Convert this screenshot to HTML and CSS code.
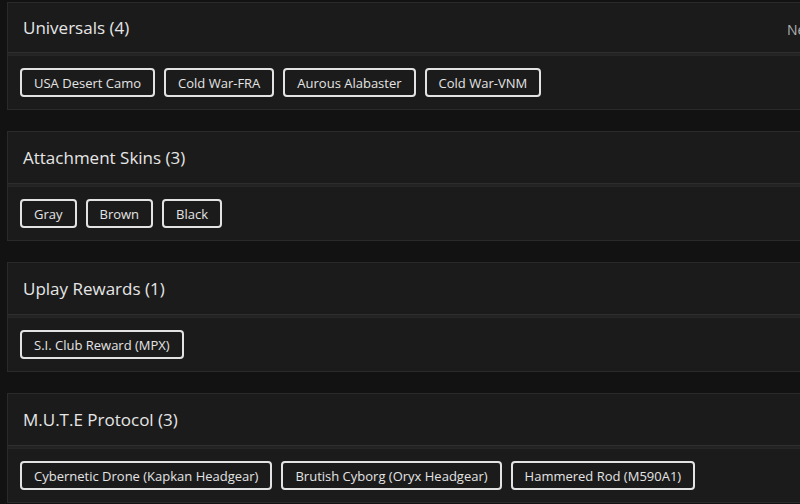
FILE: index.html
```html
<!DOCTYPE html>
<html>
<head>
<meta charset="utf-8">
<link rel="stylesheet" href="styles.css">
</head>
<body>
<div class="page">
  <section class="card">
    <header class="card-head card-head-first">
      <h2 class="title">Universals (4)</h2>
      <span class="aside">New</span>
    </header>
    <div class="card-body">
      <span class="pill">USA Desert Camo</span>
      <span class="pill">Cold War-FRA</span>
      <span class="pill">Aurous Alabaster</span>
      <span class="pill">Cold War-VNM</span>
    </div>
  </section>
  <section class="card">
    <header class="card-head">
      <h2 class="title">Attachment Skins (3)</h2>
    </header>
    <div class="card-body">
      <span class="pill">Gray</span>
      <span class="pill">Brown</span>
      <span class="pill">Black</span>
    </div>
  </section>
  <section class="card">
    <header class="card-head">
      <h2 class="title">Uplay Rewards (1)</h2>
    </header>
    <div class="card-body">
      <span class="pill">S.I. Club Reward (MPX)</span>
    </div>
  </section>
  <section class="card">
    <header class="card-head">
      <h2 class="title">M.U.T.E Protocol (3)</h2>
    </header>
    <div class="card-body">
      <span class="pill">Cybernetic Drone (Kapkan Headgear)</span>
      <span class="pill">Brutish Cyborg (Oryx Headgear)</span>
      <span class="pill">Hammered Rod (M590A1)</span>
    </div>
  </section>
</div>
</body>
</html>
```
FILE: styles.css
```css
html, body {
  margin: 0;
  padding: 0;
  background: #121212;
  overflow: hidden;
}
body {
  font-family: "Open Sans", "Noto Sans", sans-serif;
  color: #e2e2e2;
  width: 800px;
  height: 504px;
}
.page {
  padding: 2px 0 0 7px;
  display: flex;
  flex-direction: column;
  gap: 21px;
  width: 860px;
}
.card {
  background: #1b1b1b;
  border: 1px solid #2a2a2a;
  border-right: none;
}
.card-head {
  height: 51px;
  display: flex;
  align-items: center;
  padding: 0 0 0 15px;
  border-bottom: 1px solid #2e2e2e;
  box-shadow: 0 2px 0 #232323;
}
.card-head-first {
  height: 49px;
}
.title {
  margin: 0;
  font-size: 17px;
  font-weight: 500;
  color: #e6e6e6;
  flex: 1;
}
.aside {
  width: 80px;
  font-size: 14px;
  color: #b0b0b0;
  margin-top: 4px;
}
.card-body {
  margin-top: 2px;
  border-top: 1px solid #262626;
  padding: 12px;
  display: flex;
  gap: 9px;
}
.pill {
  box-sizing: border-box;
  height: 29px;
  display: inline-flex;
  align-items: center;
  padding: 0 12px;
  border: 2px solid #e3e3e3;
  border-radius: 4px;
  font-size: 13px;
  color: #e4e4e4;
  background: #1b1b1b;
  white-space: nowrap;
}
```
